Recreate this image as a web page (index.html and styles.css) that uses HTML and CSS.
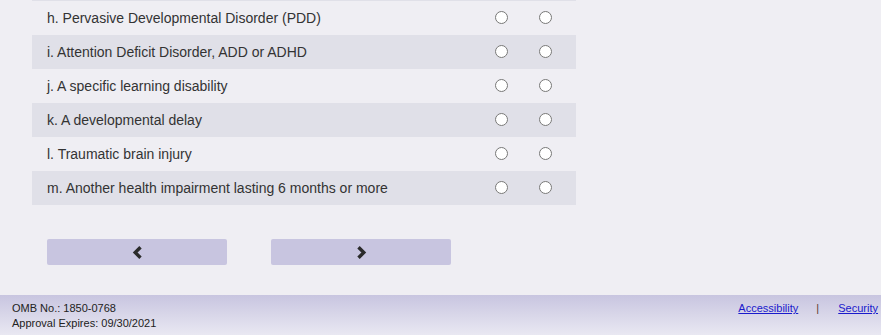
FILE: index.html
```html
<!DOCTYPE html>
<html lang="en">
<head>
  <meta charset="UTF-8">
  <title>Survey</title>
  <link rel="stylesheet" href="styles.css">
</head>
<body>
  <div class="content">
    <table class="questions">
      <tbody>
        <tr>
          <td class="label">h. Pervasive Developmental Disorder (PDD)</td>
          <td class="opt"><input type="radio" name="h"></td>
          <td class="opt"><input type="radio" name="h"></td>
        </tr>
        <tr class="shade">
          <td class="label">i. Attention Deficit Disorder, ADD or ADHD</td>
          <td class="opt"><input type="radio" name="i"></td>
          <td class="opt"><input type="radio" name="i"></td>
        </tr>
        <tr>
          <td class="label">j. A specific learning disability</td>
          <td class="opt"><input type="radio" name="j"></td>
          <td class="opt"><input type="radio" name="j"></td>
        </tr>
        <tr class="shade">
          <td class="label">k. A developmental delay</td>
          <td class="opt"><input type="radio" name="k"></td>
          <td class="opt"><input type="radio" name="k"></td>
        </tr>
        <tr>
          <td class="label">l. Traumatic brain injury</td>
          <td class="opt"><input type="radio" name="l"></td>
          <td class="opt"><input type="radio" name="l"></td>
        </tr>
        <tr class="shade">
          <td class="label">m. Another health impairment lasting 6 months or more</td>
          <td class="opt"><input type="radio" name="m"></td>
          <td class="opt"><input type="radio" name="m"></td>
        </tr>
      </tbody>
    </table>

    <div class="nav">
      <button class="nav-btn" type="button" aria-label="Previous">
        <svg width="11" height="13" viewBox="0 0 11 13"><path d="M8.5 1.2 L3.2 6.5 L8.5 11.8" fill="none" stroke="#2b2b2b" stroke-width="3.4"/></svg>
      </button>
      <button class="nav-btn" type="button" aria-label="Next">
        <svg width="11" height="13" viewBox="0 0 11 13"><path d="M2.5 1.2 L7.8 6.5 L2.5 11.8" fill="none" stroke="#2b2b2b" stroke-width="3.4"/></svg>
      </button>
    </div>
  </div>

  <footer class="footer">
    <div class="omb">
      <div>OMB No.: 1850-0768</div>
      <div>Approval Expires: 09/30/2021</div>
    </div>
    <div class="links">
      <a href="#">Accessibility</a>
      <span class="sep">|</span>
      <a href="#">Security</a>
    </div>
  </footer>
</body>
</html>
```

FILE: styles.css
```css
body {
  margin: 0;
  background: #efeef3;
  font-family: "Liberation Sans", Arial, sans-serif;
  color: #333;
}

.content {
  height: 295px;
}

.questions {
  margin-left: 32px;
  width: 544px;
  border-collapse: collapse;
  border-top: 1px solid #e0e0e8;
}

.questions td {
  height: 34px;
  padding: 0;
  font-size: 14px;
  vertical-align: middle;
}

.questions tr.shade {
  background: #e0e0e8;
}

.questions td.label {
  padding-left: 15px;
}

.questions td.opt {
  width: 44px;
}

.questions td.opt:last-child {
  padding-right: 9px;
}

.questions input[type="radio"] {
  display: block;
  width: 13px;
  height: 13px;
  margin: -1px auto 0;
}

.nav {
  display: flex;
  gap: 44px;
  padding-left: 47px;
  margin-top: 34px;
}

.nav-btn {
  width: 180px;
  height: 26px;
  border: none;
  border-radius: 2px;
  background: #c8c5e0;
  display: flex;
  align-items: center;
  justify-content: center;
  padding: 0;
  cursor: pointer;
}

.footer {
  height: 40px;
  box-sizing: border-box;
  background: linear-gradient(to bottom, #c8c5e0, #e9e8f2);
  display: flex;
  justify-content: space-between;
  padding: 6px 3px 0 12px;
  font-size: 11px;
  color: #222;
}

.omb div,
.links {
  line-height: 15px;
}

.links a {
  color: #1a1acc;
}

.links .sep {
  color: #5a3e2b;
  margin: 0 16px 0 15px;
}
```
